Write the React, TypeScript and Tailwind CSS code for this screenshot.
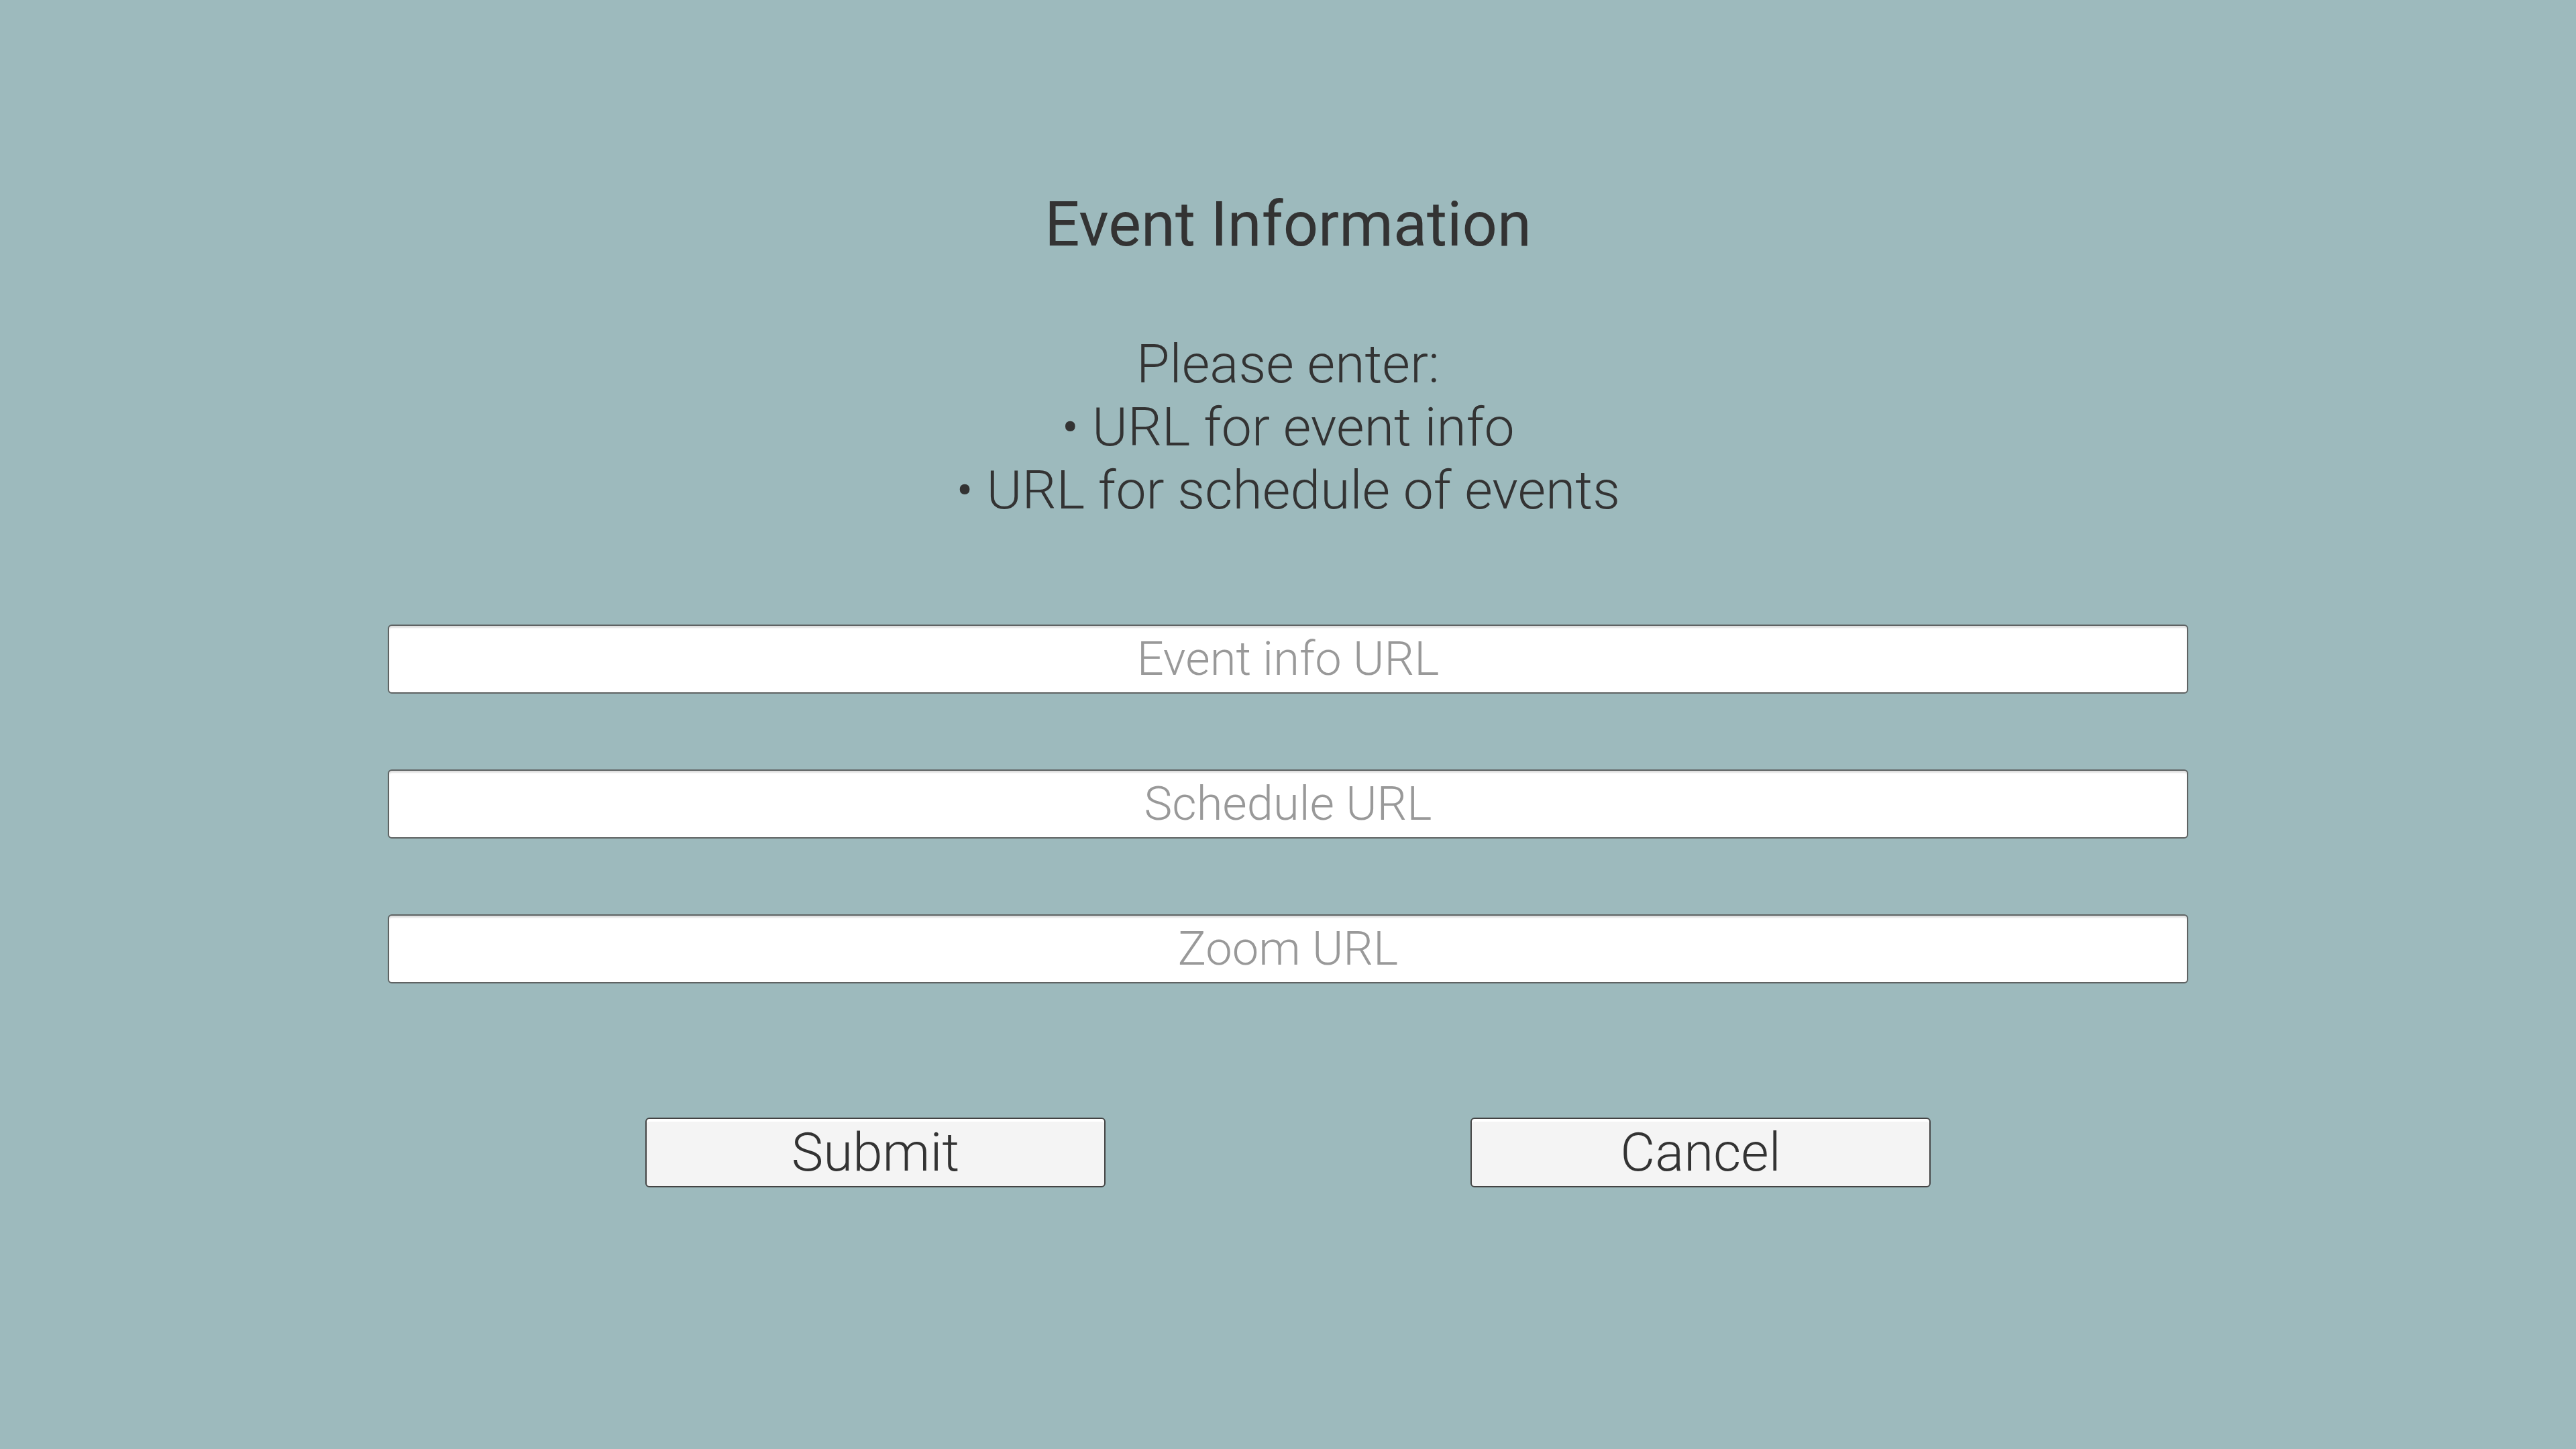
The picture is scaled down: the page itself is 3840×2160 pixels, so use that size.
import { useState } from 'react';

const fields = [
  { name: 'eventUrl', placeholder: 'Event info URL' },
  { name: 'scheduleUrl', placeholder: 'Schedule URL' },
  { name: 'zoomUrl', placeholder: 'Zoom URL' },
];

export default function App() {
  const [values, setValues] = useState<Record<string, string>>({});

  return (
    <div className="min-h-screen w-full bg-[#9dbabd] font-['Roboto',sans-serif] text-[#333333]">
      <div className="flex flex-col items-center pt-[281px]">
        {/* Title */}
        <h1 className="text-[92px] leading-[108px] font-normal">Event Information</h1>

        {/* Instructions */}
        <div className="mt-[107px] flex flex-col items-center text-[80.5px] leading-[94px] font-light">
          <p>Please enter:</p>
          <p>• URL for event info</p>
          <p>• URL for schedule of events</p>
        </div>

        {/* Inputs */}
        <div className="mt-[153px] flex w-[2684px] flex-col gap-[113px]">
          {fields.map((f) => (
            <input
              key={f.name}
              type="text"
              placeholder={f.placeholder}
              value={values[f.name] ?? ''}
              onChange={(e) => setValues({ ...values, [f.name]: e.target.value })}
              className="h-[103px] w-full rounded-[6px] border-2 border-[#5f6363] bg-white text-center text-[70.5px] font-light text-[#333333] shadow-[inset_0_3px_2px_rgba(0,0,0,0.12)] outline-none placeholder:text-[#999999]"
            />
          ))}
        </div>

        {/* Buttons */}
        <div className="mt-[200px] flex gap-[544px]">
          <button className="h-[104px] w-[686px] rounded-[6px] border-2 border-[#444444] bg-[#f4f4f4] text-[80px] font-light leading-none text-[#333333] shadow-[inset_0_4px_0_#ffffff]">
            Submit
          </button>
          <button className="h-[104px] w-[686px] rounded-[6px] border-2 border-[#444444] bg-[#f4f4f4] text-[80px] font-light leading-none text-[#333333] shadow-[inset_0_4px_0_#ffffff]">
            Cancel
          </button>
        </div>
      </div>
    </div>
  );
}
